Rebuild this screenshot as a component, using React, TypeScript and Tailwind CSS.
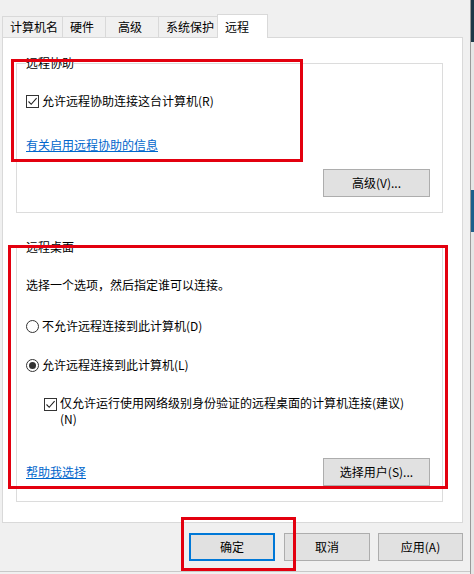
import React from "react"

const font = { fontFamily: '"Noto Sans CJK SC", "Noto Sans", sans-serif' }

const CheckBox = () => (
  <span className="inline-flex h-[13px] w-[13px] shrink-0 items-center justify-center border border-[#333] bg-white">
    <svg width="11" height="11" viewBox="0 0 11 11">
      <path d="M1.5 5.5 L4.2 8.3 L9.6 2.2" fill="none" stroke="#222" strokeWidth="1.1" />
    </svg>
  </span>
)

const Radio = ({ checked }: { checked?: boolean }) => (
  <span className="inline-flex h-[13px] w-[13px] shrink-0 items-center justify-center rounded-full border border-[#333] bg-white">
    {checked && <span className="h-[7px] w-[7px] rounded-full bg-[#333]" />}
  </span>
)

const Btn = ({ label, w, primary }: { label: string; w: number; primary?: boolean }) => (
  <button
    className={
      "flex h-[28px] items-center justify-center bg-[#e1e1e1] text-[12px] text-black " +
      (primary ? "border-2 border-[#0078d7]" : "border border-[#adadad]")
    }
    style={{ width: w }}
  >
    {label}
  </button>
)

const tabs = [
  { name: "计算机名", w: 60, pl: 7 },
  { name: "硬件", w: 43, pl: 7 },
  { name: "高级", w: 53, pl: 12 },
  { name: "系统保护", w: 59, pl: 7 },
]

export default function App() {
  return (
    <div className="relative flex h-[574px] w-[474px] overflow-hidden bg-[#f0f0f0] text-[12px] leading-[16px] text-black" style={font}>
      <div className="flex h-[572px] w-[470px] flex-col border-b border-[#c8c8c8]">
        {/* tabs */}
        <div className="ml-[2px] mt-[14px] flex h-[23px] items-end">
          {tabs.map((t) => (
            <div
              key={t.name}
              className="flex h-[21px] items-center border-l border-t border-[#d9d9d9] bg-[#f0f0f0] first:border-l"
              style={{ width: t.w, paddingLeft: t.pl }}
            >
              {t.name}
            </div>
          ))}
          <div className="relative z-10 -mb-px flex h-[24px] w-[51px] items-center border-x border-t border-[#d9d9d9] bg-white pl-[7px]">
            远程
          </div>
        </div>

        {/* panel */}
        <div className="ml-[2px] h-[486px] w-[461px] border border-[#d9d9d9] bg-white pl-[13px]">
          <fieldset className="mt-[17px] w-[427px] border border-[#dcdcdc] px-[9px] pb-[15px]">
            <legend className="px-0 leading-[16px]">远程协助</legend>
            <div className="mt-[22px] flex items-center gap-[3px]">
              <CheckBox />
              <span>允许远程协助连接这台计算机(R)</span>
            </div>
            <div className="mt-[28px]">
              <span className="text-[#0066cc] underline">有关启用远程协助的信息</span>
            </div>
            <div className="mt-[16px] flex justify-end pr-[3px]">
              <Btn label="高级(V)..." w={107} />
            </div>
          </fieldset>

          <fieldset className="mt-[26px] w-[427px] border border-[#dcdcdc] px-[9px] pb-[15px]">
            <legend className="px-0 leading-[16px]">远程桌面</legend>
            <div className="mt-[22px]">选择一个选项，然后指定谁可以连接。</div>
            <div className="mt-[25px] flex items-center gap-[3px]">
              <Radio />
              <span>不允许远程连接到此计算机(D)</span>
            </div>
            <div className="mt-[23px] flex items-center gap-[3px]">
              <Radio checked />
              <span>允许远程连接到此计算机(L)</span>
            </div>
            <div className="ml-[18px] mt-[22px] flex items-start gap-[3px]">
              <span className="mt-[2px]">
                <CheckBox />
              </span>
              <span>
                仅允许运行使用网络级别身份验证的远程桌面的计算机连接(建议)
                <br />
                (N)
              </span>
            </div>
            <div className="mt-[31px] flex items-center justify-between pr-[3px]">
              <span className="text-[#0066cc] underline">帮助我选择</span>
              <Btn label="选择用户(S)..." w={107} />
            </div>
          </fieldset>
        </div>

        {/* bottom buttons */}
        <div className="mt-[10px] flex justify-end pr-[7px]">
          <Btn label="确定" w={86} primary />
          <div className="w-[9px]" />
          <Btn label="取消" w={86} />
          <div className="w-[8px]" />
          <Btn label="应用(A)" w={85} />
        </div>
      </div>

      {/* window behind, right edge */}
      <div className="flex h-full w-[4px] flex-col border-l border-[#9a9a9a]">
        <div className="h-[42px] bg-[#1d3848]" />
        <div className="h-[148px] bg-[#e6e6e6]" />
        <div className="h-[42px] bg-[#1f5f8b]" />
        <div className="flex-1 bg-[#e6e6e6]" />
      </div>

      {/* red annotation boxes */}
      <div className="pointer-events-none absolute left-[11px] top-[59px] h-[103px] w-[292px] border-[3px] border-[#e3000f]" />
      <div className="pointer-events-none absolute left-[8px] top-[245px] h-[244px] w-[440px] border-[3px] border-[#e3000f]" />
      <div className="pointer-events-none absolute left-[181px] top-[517px] h-[54px] w-[115px] border-[3px] border-[#e3000f]" />
    </div>
  )
}
